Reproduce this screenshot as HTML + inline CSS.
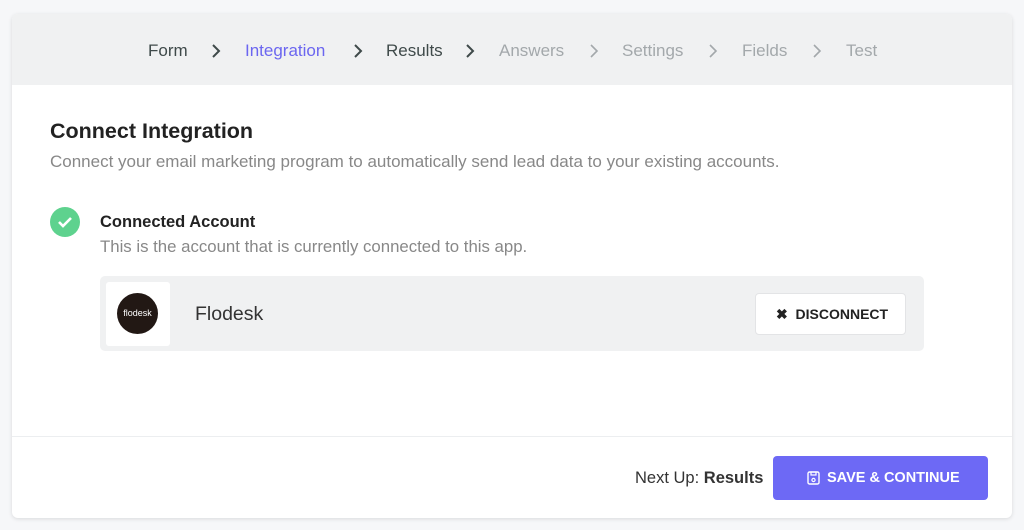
<!DOCTYPE html>
<html><head><style>
*{margin:0;padding:0;box-sizing:border-box}
body{width:1024px;height:530px;background:#f6f7f9;font-family:"Liberation Sans",sans-serif;position:relative;overflow:hidden}
.card{position:absolute;left:12px;top:14px;width:1000px;height:504px;background:#fff;border-radius:6px;box-shadow:0 1px 4px rgba(0,0,0,.12);overflow:hidden}
.hdr{position:absolute;left:0;top:0;width:100%;height:71px;background:#f0f1f2}
.t{position:absolute;font-size:17px;top:27px}
.ch{position:absolute;top:29px}
.a{position:absolute;white-space:nowrap}
</style></head><body>
<div class="card">
<div class="hdr">
<span class="t" style="left:136px;color:#3f4a4a">Form</span>
<svg class="ch" style="left:199px" width="10" height="16"><path d="M2 2l6 6-6 6" fill="none" stroke="#3f4a4a" stroke-width="2"/></svg>
<span class="t" style="left:233px;color:#6b66f0">Integration</span>
<svg class="ch" style="left:341px" width="10" height="16"><path d="M2 2l6 6-6 6" fill="none" stroke="#3f4a4a" stroke-width="2"/></svg>
<span class="t" style="left:374px;color:#3f4a4a">Results</span>
<svg class="ch" style="left:453px" width="10" height="16"><path d="M2 2l6 6-6 6" fill="none" stroke="#3f4a4a" stroke-width="2"/></svg>
<span class="t" style="left:487px;color:#a3a8ab">Answers</span>
<svg class="ch" style="left:577px" width="10" height="16"><path d="M2 2l6 6-6 6" fill="none" stroke="#a3a8ab" stroke-width="1.6"/></svg>
<span class="t" style="left:610px;color:#a3a8ab">Settings</span>
<svg class="ch" style="left:696px" width="10" height="16"><path d="M2 2l6 6-6 6" fill="none" stroke="#a3a8ab" stroke-width="1.6"/></svg>
<span class="t" style="left:730px;color:#a3a8ab">Fields</span>
<svg class="ch" style="left:800px" width="10" height="16"><path d="M2 2l6 6-6 6" fill="none" stroke="#a3a8ab" stroke-width="1.6"/></svg>
<span class="t" style="left:834px;color:#a3a8ab">Test</span>
</div>
<div class="a" style="left:38px;top:105px;font-size:21.5px;font-weight:bold;color:#222">Connect Integration</div>
<div class="a" style="left:38px;top:138px;font-size:17px;color:#888">Connect your email marketing program to automatically send lead data to your existing accounts.</div>
<svg class="a" style="left:38px;top:193px" width="30" height="30"><circle cx="15" cy="15" r="15" fill="#5ed28e"/><path d="M9 15l4 4 8-8" fill="none" stroke="#fff" stroke-width="2.6"/></svg>
<div class="a" style="left:88px;top:199px;font-size:16.5px;font-weight:bold;color:#222">Connected Account</div>
<div class="a" style="left:88px;top:223px;font-size:16.8px;color:#888">This is the account that is currently connected to this app.</div>
<div class="a" style="left:88px;top:262px;width:824px;height:75px;background:#f0f1f2;border-radius:5px">
<div class="a" style="left:6px;top:6px;width:64px;height:64px;background:#fff;border-radius:3px">
<div class="a" style="left:11px;top:11px;width:41px;height:41px;border-radius:50%;background:#221814;color:#fff;font-size:9px;text-align:center;line-height:41px">flodesk</div></div>
<div class="a" style="left:95px;top:27px;font-size:19.5px;color:#333">Flodesk</div>
<div class="a" style="left:655px;top:17px;width:151px;height:42px;background:#fff;border-radius:4px;border:1px solid #e3e4e6;font-size:14px;font-weight:bold;color:#222;line-height:40px;padding-left:20px">✖&nbsp; DISCONNECT</div>
</div>
<div class="a" style="left:0;top:422px;width:100%;height:1px;background:#eceef0"></div>
<div class="a" style="left:623px;top:455px;font-size:16.5px;color:#333">Next Up: <b>Results</b></div>
<div class="a" style="left:761px;top:442px;width:215px;height:44px;background:#6d69f5;border-radius:4px;color:#fff;font-size:14.5px;font-weight:bold;line-height:44px;padding-left:54px">SAVE &amp; CONTINUE
<svg class="a" style="left:34px;top:15px" width="13" height="14"><rect x="1" y="1" width="11" height="12" rx="1.5" fill="none" stroke="#fff" stroke-width="1.4"/><rect x="4" y="1" width="5" height="3" fill="none" stroke="#fff" stroke-width="1.2"/><circle cx="6.5" cy="9" r="1.6" fill="none" stroke="#fff" stroke-width="1.2"/></svg></div>
</div>
</body></html>
